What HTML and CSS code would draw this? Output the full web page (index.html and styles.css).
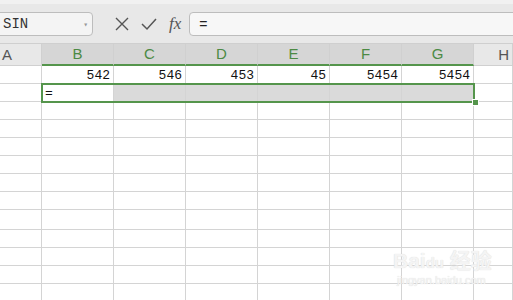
FILE: index.html
```html
<!DOCTYPE html>
<html>
    <head>
        <title>Sheet</title>
        <link rel="stylesheet" href="styles.css">
    </head>
    <body>
        <div class="toolbar">
            <div class="namebox">
                <span>SIN</span>
                <span class="drop">&#9662;</span>
            </div>
            <div class="icons">
                <svg class="ico" width="14" height="14" viewBox="0 0 14 14">
                    <path d="M1 1 L13 13 M13 1 L1 13" stroke="#555" stroke-width="1.4" fill="none"/>
                </svg>
                <svg class="ico" width="16" height="14" viewBox="0 0 16 14">
                    <path d="M1 7 L6 12 L15 2" stroke="#555" stroke-width="1.5" fill="none"/>
                </svg>
                <span class="fx">fx</span>
            </div>
            <div class="formula">=</div>
        </div>

        <div class="sheet">
            <!-- header -->
            <div class="cell head">A</div>
            <div class="cell head sel">B</div>
            <div class="cell head sel">C</div>
            <div class="cell head sel">D</div>
            <div class="cell head sel">E</div>
            <div class="cell head sel">F</div>
            <div class="cell head sel">G</div>
            <div class="cell head last">H</div>
            <!-- row 1 -->
            <div class="cell"></div>
            <div class="cell num">542</div>
            <div class="cell num">546</div>
            <div class="cell num">453</div>
            <div class="cell num">45</div>
            <div class="cell num">5454</div>
            <div class="cell num">5454</div>
            <div class="cell"></div>
            <!-- row 2 -->
            <div class="cell"></div>
            <div class="cell txt">=</div>
            <div class="cell grey"></div>
            <div class="cell grey"></div>
            <div class="cell grey"></div>
            <div class="cell grey"></div>
            <div class="cell grey"></div>
            <div class="cell"></div>
        </div>
        <div class="sheet rest" id="rest"></div>

        <div class="selbox"></div>
        <div class="handle"></div>

        <div class="mark">
            <div class="mark_big">Bai<span class="paw">du</span> 经验</div>
            <div class="mark_small">jingyan.baidu.com</div>
        </div>

        <script>
            /// empty rows below
            var rest = document.getElementById("rest");
            var heights = [18, 18, 18, 18, 18, 18, 20, 18, 18, 18, 18];
            for (var i = 0; i < heights.length; i++) {
                for (var j = 0; j < 8; j++) {
                    var c = document.createElement("div");
                    c.className = "cell";
                    c.style.height = heights[i] + "px";
                    rest.appendChild(c);
                }
            }
        </script>
    </body>
</html>
```

FILE: styles.css
```css
body {
    margin: 0;
    width: 513px;
    height: 300px;
    overflow: hidden;
    background: #fff;
    font-family: "Liberation Sans", Arial, sans-serif;
    position: relative;
}
.toolbar {
    height: 44px;
    box-sizing: border-box;
    background: #e8e8e8;
    border-top: 4px solid #f1f1f1;
    border-bottom: 1px solid #cfcfcf;
    display: flex;
    align-items: center;
    padding-top: 1px;
}
.namebox {
    width: 98px;
    height: 24px;
    margin-left: -5px;
    box-sizing: border-box;
    background: #f4f4f4;
    border: 1px solid #bdbdbd;
    border-radius: 4px;
    display: flex;
    align-items: center;
    justify-content: space-between;
    padding: 0 4px 0 7px;
    font-family: "Liberation Mono", monospace;
    font-size: 14px;
    color: #333;
}
.drop {
    font-size: 8px;
    color: #999;
}
.icons {
    display: flex;
    align-items: center;
    gap: 12px;
    margin-left: 22px;
}
.fx {
    font-family: "Liberation Serif", serif;
    font-style: italic;
    font-size: 17px;
    color: #555;
}
.formula {
    flex: 1;
    height: 24px;
    margin-left: 8px;
    margin-right: -6px;
    box-sizing: border-box;
    background: #f7f7f7;
    border: 1px solid #bdbdbd;
    border-radius: 4px;
    padding-left: 9px;
    font-size: 14px;
    line-height: 22px;
    color: #222;
}
.sheet {
    display: grid;
    grid-template-columns: 42px repeat(6, 72px) 1fr;
}
.cell {
    box-sizing: border-box;
    height: 18px;
    border-right: 1px solid #d4d4d4;
    border-bottom: 1px solid #d4d4d4;
    font-family: "Liberation Mono", monospace;
    font-size: 13px;
    line-height: 19px;
    color: #111;
}
.head {
    height: 22px;
    background: #e8e8e8;
    border-right: 1px solid #d0d0d0;
    border-bottom: 1px solid #d0d0d0;
    font-family: "Liberation Sans", Arial, sans-serif;
    font-size: 15px;
    line-height: 22px;
    color: #555;
    text-align: center;
}
.head:first-child {
    text-align: left;
    padding-left: 2px;
}
.head.last {
    text-align: right;
    padding-right: 3px;
}
.head.sel {
    background: #d6d6d6;
    color: #4c8a44;
    border-bottom: 2px solid #55954c;
    line-height: 20px;
}
.num {
    text-align: right;
    padding-right: 3px;
}
.txt {
    padding-left: 3px;
}
.grey {
    background: #dadada;
}
.selbox {
    position: absolute;
    left: 41px;
    top: 83px;
    width: 434px;
    height: 20px;
    box-sizing: border-box;
    border: 2px solid #55954c;
}
.handle {
    position: absolute;
    left: 472px;
    top: 99px;
    width: 5px;
    height: 5px;
    background: #55954c;
    border: 1px solid #fff;
}
.mark {
    position: absolute;
    left: 393px;
    top: 244px;
    color: #f4f4f4;
    text-shadow: 0 0 1px #d4d4d4;
}
.mark_big {
    font-family: "Liberation Sans", "Noto Sans CJK SC", sans-serif;
    font-size: 21px;
    font-weight: bold;
}
.paw {
    font-size: 15px;
}
.mark_small {
    font-size: 11px;
    margin-left: 4px;
}
```
